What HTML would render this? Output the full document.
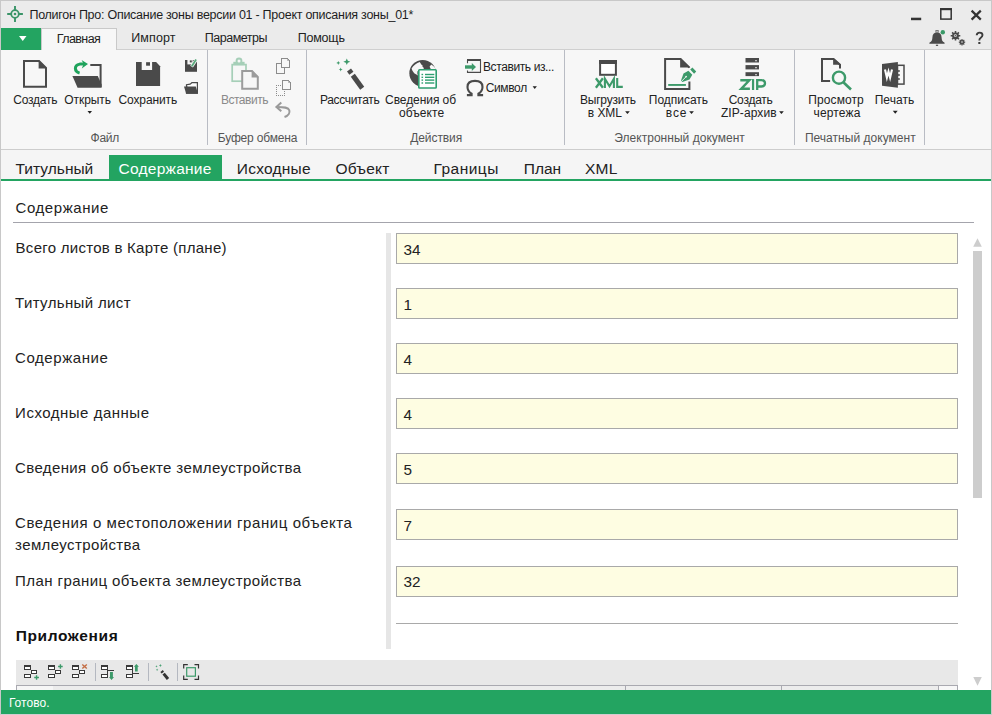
<!DOCTYPE html>
<html><head><meta charset="utf-8">
<style>
*{margin:0;padding:0;box-sizing:border-box}
html,body{width:992px;height:715px;overflow:hidden;background:#fff;font-family:"Liberation Sans",sans-serif;color:#1e1e1e}
.a{position:absolute}
.t{position:absolute;white-space:nowrap;line-height:1;font-family:"Liberation Sans",sans-serif}
svg{position:absolute;overflow:visible}
.sep{position:absolute;width:1px;background:#b9bcc4}
.inp{position:absolute;left:396px;width:562px;height:31px;background:#fefde2;border:1px solid #a9a9a9}
</style></head>
<body>
<!-- backgrounds -->
<div class="a" style="left:0;top:0;width:992px;height:49px;background:#ebebeb"></div>
<!-- ribbon body -->
<div class="a" style="left:0;top:49px;width:992px;height:101px;background:#f7f7f7;border-top:1px solid #cfcfcf;border-bottom:1px solid #cdcdcd"></div>
<!-- green app button -->
<div class="a" style="left:1px;top:28px;width:40px;height:22px;background:#23a461"></div>
<svg style="left:0;top:0" width="992" height="60">
  <polygon points="19,36 26.5,36 22.75,41" fill="#fff"/>
</svg>
<!-- active ribbon tab -->
<div class="a" style="left:41px;top:28px;width:76px;height:22px;background:#f7f7f7;border:1px solid #c9c9c9;border-bottom:none"></div>
<!-- ribbon separators -->
<div class="sep" style="left:207px;top:50px;height:95px"></div>
<div class="sep" style="left:306px;top:50px;height:95px"></div>
<div class="sep" style="left:564px;top:50px;height:95px"></div>
<div class="sep" style="left:794px;top:50px;height:95px"></div>
<div class="sep" style="left:924px;top:50px;height:95px"></div>
<!-- doc tabs strip -->
<div class="a" style="left:0;top:150px;width:992px;height:29px;background:#f5f5f5"></div>
<div class="a" style="left:109px;top:155px;width:113px;height:25px;background:#23a461"></div>
<div class="a" style="left:0;top:179px;width:992px;height:2px;background:#23a461"></div>
<!-- content header line -->
<div class="a" style="left:13px;top:222px;width:961px;height:1px;background:#a4a4ac"></div>
<!-- splitter -->
<div class="a" style="left:386px;top:233px;width:5px;height:416px;background:#e6e6e6"></div>
<!-- inputs -->
<div class="inp" style="top:233px"></div>
<div class="inp" style="top:288px"></div>
<div class="inp" style="top:343px"></div>
<div class="inp" style="top:398px"></div>
<div class="inp" style="top:453px"></div>
<div class="inp" style="top:509px"></div>
<div class="inp" style="top:566px"></div>
<div class="a" style="left:396px;top:623px;width:562px;height:1px;background:#a9a9a9"></div>
<!-- scrollbar -->
<svg style="left:0;top:0" width="992" height="715">
  <polygon points="973.2,246.7 977.5,238.3 981.8,246.7" fill="#cdcdcd"/>
  <rect x="973" y="251" width="9" height="247" fill="#cdcdcd"/>
  <polygon points="973.3,677 981.8,677 977.5,685.7" fill="#cdcdcd"/>
</svg>
<!-- bottom toolbar -->
<div class="a" style="left:16px;top:660px;width:942px;height:25px;background:#e8e8e8"></div>
<div class="a" style="left:16px;top:685px;width:942px;height:1px;background:#a9a9b0"></div>
<div class="a" style="left:16px;top:686px;width:942px;height:4px;background:#ececec"></div>
<div class="a" style="left:17px;top:686px;width:36px;height:4px;background:#f6f6f6"></div>
<div class="a" style="left:16px;top:686px;width:1px;height:4px;background:#a9a9b0"></div>
<div class="a" style="left:625px;top:686px;width:1px;height:4px;background:#a9a9b0"></div>
<div class="a" style="left:781px;top:686px;width:1px;height:4px;background:#a9a9b0"></div>
<div class="a" style="left:938px;top:686px;width:1px;height:4px;background:#a9a9b0"></div>
<div class="a" style="left:939px;top:686px;width:18px;height:4px;background:#f8f8f8"></div>
<div class="a" style="left:957px;top:686px;width:1px;height:4px;background:#a9a9b0"></div>
<div class="a" style="left:95px;top:663px;width:1px;height:18px;background:#b4b8c0"></div>
<div class="a" style="left:148px;top:663px;width:1px;height:18px;background:#b4b8c0"></div>
<div class="a" style="left:177px;top:663px;width:1px;height:18px;background:#b4b8c0"></div>
<!-- status bar -->
<div class="a" style="left:0;top:690px;width:992px;height:24px;background:#23a461"></div>
<!-- window border -->
<div class="a" style="left:0;top:0;width:992px;height:715px;border:1px solid #c8c8c8;border-bottom-color:#d2cdd0"></div>
<svg style="left:0;top:0" width="992" height="715" viewBox="0 0 992 715">
<!-- app icon -->
<g fill="none" stroke="#3a9468">
  <circle cx="15" cy="14" r="3.8" stroke-width="1.8"/>
  <path d="M7.2 14H11.2M18.8 14H22.9M15 6V10.2M15 17.8V21.9" stroke-width="1.9"/>
</g>
<circle cx="15" cy="14" r="1.3" fill="#3a9468"/>
<!-- window controls -->
<rect x="911" y="17.7" width="10.2" height="2.5" fill="#333"/>
<rect x="940.8" y="8.9" width="10.4" height="10.2" fill="none" stroke="#333" stroke-width="1.5"/>
<rect x="940" y="8.2" width="12" height="2" fill="#333"/>
<path d="M971.6 10.6L980.8 19.6M980.8 10.6L971.6 19.6" stroke="#333" stroke-width="2.2"/>
<!-- bell -->
<path d="M929.3 43.8L929.6 42.6C931.6 41.7 932.3 40 932.4 37.5C932.5 34.5 934 32.6 937 32.6C940 32.6 941.5 34.5 941.6 37.5C941.7 40 942.4 41.7 944.4 42.6L944.7 43.8Z" fill="#4a4a4a"/>
<rect x="935.9" y="30.5" width="2.3" height="1.7" fill="none" stroke="#6e6e6e" stroke-width="0.9"/>
<rect x="935.9" y="44.7" width="2.2" height="1.2" fill="#4a4a4a"/>
<circle cx="942.8" cy="32.2" r="2.2" fill="#3a9a68"/>
<!-- gears -->
<g fill="#4a4a4a">
  <circle cx="955.5" cy="35.8" r="3.4"/>
  <path d="M955.5 31V40.6M950.7 35.8H960.3M952.1 32.4L958.9 39.2M958.9 32.4L952.1 39.2" stroke="#4a4a4a" stroke-width="1.6"/>
  <circle cx="962" cy="42.2" r="2.3"/>
  <path d="M962 39V45.4M958.8 42.2H965.2M959.7 39.9L964.3 44.5M964.3 39.9L959.7 44.5" stroke="#4a4a4a" stroke-width="1.2"/>
</g>
<circle cx="955.4" cy="35.6" r="1.5" fill="#c8c8c8"/><circle cx="955.4" cy="35.6" r="0.6" fill="#4a4a4a"/>
<circle cx="962" cy="42.1" r="1" fill="#aaaaaa"/>
<!-- ? -->
<path d="M976.7 35.3C976.8 33.5 978 32.6 979.6 32.6C981.4 32.6 982.5 33.7 982.5 35.1C982.5 36.4 981.8 37.1 980.8 37.8C979.8 38.5 979.3 39.1 979.3 40.4" fill="none" stroke="#3c3c3c" stroke-width="1.9"/><rect x="978.3" y="42" width="2.1" height="2" fill="#3c3c3c"/>
<!-- Создать: new doc -->
<path d="M24 61H39L46 68V86.8H24Z" fill="none" stroke="#4a4a4a" stroke-width="2"/>
<path d="M38.6 60L47 68.6H38.6Z" fill="#4a4a4a"/>
<!-- Открыть: open folder -->
<path d="M90.3 65H100.6V87" fill="none" stroke="#4a4a4a" stroke-width="2"/>
<path d="M72.4 76H97.8L101.6 84.5V87.8H77.6Z" fill="#4a4a4a"/>
<path d="M79.6 73.1C74.3 71.6 73.6 65.4 79.8 64.1C81 63.9 82.5 63.9 84.5 63.9" fill="none" stroke="#1fa35c" stroke-width="3"/>
<path d="M81.6 59.9L88 64.1L81.8 68.6L83.6 64.1Z" fill="#1fa35c"/>
<path d="M87.5 111H92L89.75 113.8Z" fill="#222"/>
<!-- Сохранить: floppy -->
<path d="M136 62H156.1L160.1 66.3V86H136Z" fill="#4a4a4a"/>
<rect x="141.7" y="61.5" width="10.4" height="8.5" fill="#f7f7f7"/>
<rect x="146.1" y="62.2" width="3.9" height="3.5" fill="#4a4a4a"/>
<!-- small save-as -->
<rect x="185" y="60" width="12" height="11.8" fill="#4a4a4a"/>
<rect x="187.4" y="59.5" width="5.3" height="4.9" fill="#f7f7f7"/>
<rect x="189.8" y="60.4" width="2" height="2" fill="#4a4a4a"/>
<path d="M191.6 66.6L196.3 59.5" stroke="#f7f7f7" stroke-width="3.2"/>
<path d="M191.8 66.3L196.1 59.6" stroke="#5aaa7d" stroke-width="1.8"/>
<!-- small open -->
<path d="M185.9 93.7V84.3L190 83.6L191.7 82H198V93.7Z" fill="#4a4a4a"/>
<path d="M187.1 86.5V85.3L190.4 84.7L192.2 83.2H196.8V91Z" fill="#fdfdfd"/>
<path d="M184 86.4H195.8L198 93.7H186.2Z" fill="#4a4a4a"/>
<!-- Вставить: paste (disabled) -->
<rect x="232.2" y="64.6" width="13.8" height="16.6" fill="none" stroke="#a6cfb8" stroke-width="1.7"/>
<rect x="233.3" y="61.8" width="11.3" height="3.4" fill="#a6cfb8"/>
<circle cx="239" cy="61" r="3.4" fill="#a6cfb8"/>
<circle cx="239" cy="61" r="1.5" fill="#f7f7f7"/>
<path d="M242.2 71.1H252L257.8 77V88.7H242.2Z" fill="#f7f7f7" stroke="#9c9c9c" stroke-width="2"/>
<path d="M251.6 70.1L258.8 77.5H251.6Z" fill="#9c9c9c"/>
<!-- copy -->
<g shape-rendering="crispEdges">
<rect x="276.5" y="63.5" width="8" height="10" fill="none" stroke="#8c8c8c" stroke-width="1.1"/>
<path d="M281.5 58.5H287.5L289.5 60.5V67.5H281.5Z" fill="#f7f7f7" stroke="#8c8c8c" stroke-width="1.1"/>
<path d="M282.5 80.5H288.5L290.5 82.5V89.5H282.5Z" fill="#f7f7f7" stroke="#8c8c8c" stroke-width="1.1"/>
<rect x="276" y="85" width="1" height="1" fill="#8c8c8c"/><rect x="278" y="85" width="1" height="1" fill="#8c8c8c"/><rect x="280" y="85" width="1" height="1" fill="#8c8c8c"/><rect x="276" y="87" width="1" height="1" fill="#8c8c8c"/><rect x="276" y="89" width="1" height="1" fill="#8c8c8c"/><rect x="276" y="91" width="1" height="1" fill="#8c8c8c"/><rect x="276" y="93" width="1" height="1" fill="#8c8c8c"/><rect x="276" y="95" width="1" height="1" fill="#8c8c8c"/><rect x="278" y="95" width="1" height="1" fill="#8c8c8c"/><rect x="280" y="95" width="1" height="1" fill="#8c8c8c"/><rect x="282" y="95" width="1" height="1" fill="#8c8c8c"/><rect x="284" y="95" width="1" height="1" fill="#8c8c8c"/><rect x="284" y="91" width="1" height="1" fill="#8c8c8c"/><rect x="284" y="93" width="1" height="1" fill="#8c8c8c"/>
</g>
<path d="M287.3 58.8L289.2 60.7H287.3Z" fill="#8c8c8c"/><path d="M288.3 80.8L290.2 82.7H288.3Z" fill="#8c8c8c"/>
<!-- undo -->
<path d="M284.5 117C288.8 115.5 290 112.5 289.3 110.2C288.3 107.2 284.5 106.9 277 106.9" fill="none" stroke="#9a9a9a" stroke-width="2"/>
<path d="M281.3 102.6L276.4 106.9L281.3 111.3" fill="none" stroke="#9a9a9a" stroke-width="2"/>
<!-- Рассчитать: wand -->
<g fill="#3d9a6a">
  <path d="M346.8 58.4L347.8 60.7L350.3 61.7L347.8 62.7L346.8 65.1L345.8 62.7L343.3 61.7L345.8 60.7Z"/>
  <path d="M338.3 60.9L338.9 62.3L340.3 62.9L338.9 63.5L338.3 64.9L337.7 63.5L336.3 62.9L337.7 62.3Z"/>
  <path d="M340.7 67.5L341.3 68.9L342.7 69.5L341.3 70.1L340.7 71.5L340.1 70.1L338.7 69.5L340.1 68.9Z"/>
</g>
<path d="M349 70L351.4 73.3" stroke="#4a4a4a" stroke-width="5"/>
<path d="M352.8 75.2L362.2 88.3" stroke="#4a4a4a" stroke-width="5"/>
<!-- Сведения об объекте: globe -->
<circle cx="422.7" cy="73.3" r="13.35" fill="#4a4a4a"/>
<path d="M411.6 68.6C413.5 65.5 416.5 63 419.8 62.1L421.3 64.4L422.6 65.4L422.4 66.4L423.5 67.6L423.9 69.2L419 69.8L417.4 71.6L417.4 74.2L418.5 75.8L414.2 73.2L412.3 70.5Z" fill="#f7f7f7"/>
<path d="M429.6 66.7L431.2 64.6C433.2 65.8 434.8 67.2 435.8 69.3L431 69.5Z" fill="#f7f7f7"/>
<rect x="418.8" y="69.8" width="17.4" height="18.2" rx="0.8" fill="#fff" stroke="#2e9f70" stroke-width="1.6"/>
<g fill="#2e9f70">
  <rect x="421.5" y="73.8" width="1.6" height="1.4"/><rect x="425" y="73.8" width="9.3" height="1.4"/>
  <rect x="421.5" y="76.6" width="1.6" height="1.4"/><rect x="425" y="76.6" width="9.3" height="1.4"/>
  <rect x="421.5" y="79.4" width="1.6" height="1.4"/><rect x="425" y="79.4" width="9.3" height="1.4"/>
  <rect x="421.5" y="82.3" width="1.6" height="1.4"/><rect x="425" y="82.3" width="9.3" height="1.4"/>
</g>
<!-- Вставить из: icon -->
<rect x="467" y="59" width="14" height="2" fill="#4a4a4a"/>
<path d="M467.5 60V63.3M467.5 70.5V72.4H480.5V60" fill="none" stroke="#4a4a4a" stroke-width="1.1"/>
<rect x="465" y="65.3" width="7.3" height="3.4" fill="#3d9a6a"/>
<path d="M471.8 62.9L476 67L471.8 71.1Z" fill="#3d9a6a"/>
<!-- omega -->
<path d="M466.9 95.1H471.6V93.6C468.8 92 467.5 89.5 467.5 86.9C467.5 82.9 470.7 80.9 475 80.9C479.3 80.9 482.5 82.9 482.5 86.9C482.5 89.5 481.2 92 478.4 93.6V95.1H483.1" fill="none" stroke="#4a4a4a" stroke-width="2.1"/>
<path d="M532.6 86.3H536.9L534.75 88.9Z" fill="#222"/>
<!-- XML icon -->
<rect x="600.1" y="61" width="15.8" height="13.8" fill="#fff" stroke="#4a4a4a" stroke-width="2"/>
<rect x="599.1" y="60" width="17.8" height="4" fill="#4a4a4a"/>
<g fill="none" stroke="#3d9a6a" stroke-width="2.1">
<path d="M595.9 78.3L602.9 87.8M602.9 78.3L595.9 87.8" stroke-width="2.3"/>
<path d="M604.9 88V78.8L609.5 86.2L613.9 78.8V88" stroke-linejoin="miter"/>
<path d="M617.2 78.1V86.9H622.8"/>
</g>
<path d="M625.1 111.2H629.8L627.45 113.9Z" fill="#222"/>
<!-- sign doc -->
<path d="M689.4 81.6V88.9H665.1V59.1H680.6L689.4 67.6" fill="none" stroke="#4a4a4a" stroke-width="2"/>
<path d="M680.1 58.1L690.4 67.5H680.1Z" fill="#4a4a4a"/>
<rect x="668.2" y="84" width="17.7" height="1.9" fill="#3d9a6a"/>
<path d="M681 80.6L683.5 73.6L688.4 70.8L692.3 74.7L689.5 79.5L682.4 82Z" fill="#3d9a6a"/>
<path d="M690.2 69.6L692.4 67.6L696.2 71.5L694.1 73.7Z" fill="#3d9a6a"/>
<path d="M681.6 81.3L685.8 77" stroke="#f7f7f7" stroke-width="0.9"/>
<circle cx="686.1" cy="76.6" r="0.9" fill="#f7f7f7"/>
<path d="M689.2 111.2H693.9L691.55 113.9Z" fill="#222"/>
<!-- ZIP icon -->
<g fill="#4a4a4a">
  <rect x="745.5" y="58" width="13.5" height="4.5"/>
  <rect x="745.5" y="65.1" width="13.5" height="4.3"/>
  <rect x="745.5" y="72.2" width="13.5" height="3.9"/>
</g>
<g fill="#bbb"><rect x="755" y="60" width="2" height="1.3"/><rect x="755" y="67" width="2" height="1.3"/><rect x="755" y="74" width="2" height="1.3"/></g>
<g fill="none" stroke="#3d9a6a">
<path d="M740.3 80.3H749.3L741.2 88.8H749.9" stroke-width="2.4" stroke-linejoin="miter"/>
<path d="M753.05 79.1V90" stroke-width="2.2"/>
<path d="M757.2 90V80.2H761.4C763.9 80.2 765 81.5 765 83.35C765 85.2 763.9 86.5 761.4 86.5H757.2" stroke-width="2.3"/>
</g>
<path d="M779.1 111.2H783.8L781.45 113.9Z" fill="#222"/>
<!-- preview -->
<path d="M830.1 81H822V59H833.6L840 64.8V68.6" fill="none" stroke="#4a4a4a" stroke-width="2"/>
<path d="M833.1 58L841 64.7H833.1Z" fill="#4a4a4a"/>
<circle cx="839" cy="77.7" r="6.1" fill="none" stroke="#3d9a6a" stroke-width="2.4"/>
<path d="M843.6 82.5L851 89.5" stroke="#3d9a6a" stroke-width="2.6"/>
<!-- word -->
<rect x="897.5" y="65.3" width="6.5" height="18.8" fill="none" stroke="#4a4a4a" stroke-width="1.5"/>
<path d="M882 64.1L897.9 62.1V87.8L882 85.8Z" fill="#4a4a4a"/>
<g fill="#4a4a4a"><rect x="897" y="70.2" width="2.8" height="1.6"/><rect x="897" y="74.2" width="2.8" height="1.6"/><rect x="897" y="78.2" width="2.8" height="1.6"/></g>
<path d="M885 69.4L886.9 77.6L888.5 71.6L890.1 77.6L892 69.4" fill="none" stroke="#fff" stroke-width="2.1" stroke-linejoin="miter" stroke-miterlimit="6"/>
<path d="M892.8 110.8H897.7L895.25 113.8Z" fill="#222"/>
<!-- bottom toolbar icons -->
<g shape-rendering="crispEdges">
<rect x="24" y="665" width="7" height="5" fill="#3a3a3a"/><rect x="25" y="667" width="5" height="2" fill="#fff"/>
<rect x="31" y="670" width="6" height="4" fill="#3a3a3a"/><rect x="32" y="671" width="4" height="2" fill="#fff"/>
<rect x="24" y="674" width="7" height="4" fill="#3a3a3a"/><rect x="25" y="675" width="5" height="2" fill="#fff"/>
<rect x="48" y="665" width="7" height="5" fill="#3a3a3a"/><rect x="49" y="667" width="5" height="2" fill="#fff"/>
<rect x="55" y="670" width="6" height="4" fill="#3a3a3a"/><rect x="56" y="671" width="4" height="2" fill="#fff"/>
<rect x="48" y="674" width="7" height="4" fill="#3a3a3a"/><rect x="49" y="675" width="5" height="2" fill="#fff"/>
<rect x="72" y="665" width="7" height="5" fill="#3a3a3a"/><rect x="73" y="667" width="5" height="2" fill="#fff"/>
<rect x="79" y="670" width="6" height="4" fill="#3a3a3a"/><rect x="80" y="671" width="4" height="2" fill="#fff"/>
<rect x="72" y="674" width="7" height="4" fill="#3a3a3a"/><rect x="73" y="675" width="5" height="2" fill="#fff"/>
<rect x="101" y="665" width="7" height="5" fill="#3a3a3a"/><rect x="102" y="667" width="5" height="2" fill="#fff"/>
<rect x="101" y="674" width="7" height="4" fill="#3a3a3a"/><rect x="102" y="675" width="5" height="2" fill="#fff"/>
<rect x="107" y="669" width="1" height="5" fill="#3a3a3a"/>
<rect x="126" y="665" width="7" height="5" fill="#3a3a3a"/><rect x="127" y="667" width="5" height="2" fill="#fff"/>
<rect x="126" y="674" width="7" height="4" fill="#3a3a3a"/><rect x="127" y="675" width="5" height="2" fill="#fff"/>
<rect x="132" y="669" width="1" height="5" fill="#3a3a3a"/>
<rect x="107" y="670" width="7" height="1" fill="#3a3a3a"/>
<rect x="132" y="673" width="7" height="1" fill="#3a3a3a"/>
</g>
<path d="M34.2 677.5H38.9M36.55 675.2V679.8" stroke="#3d9a6a" stroke-width="1.4"/>
<path d="M58.1 666.5H62.7M60.4 664.2V668.8" stroke="#3d9a6a" stroke-width="1.4"/>
<path d="M82.3 664.4L86.8 668.6M86.8 664.4L82.3 668.6" stroke="#c46e45" stroke-width="1.4"/>
<path d="M110 672.1H112.9V677H114L111.5 680.1L109 677H110Z" fill="#3d9a6a"/>
<path d="M135 671.6H137.7V666.8H138.9L136.4 663.9L133.9 666.8H135Z" fill="#3d9a6a"/>
<g fill="#4ea377"><path d="M156.5 665.2L156.9 666L157.7 666.4L156.9 666.8L156.5 667.6L156.1 666.8L155.3 666.4L156.1 666Z"/><path d="M160.4 664L160.9 665L161.9 665.5L160.9 666L160.4 667L159.9 666L158.9 665.5L159.9 665Z"/><path d="M157.1 668.6L157.5 669.4L158.3 669.8L157.5 670.2L157.1 671L156.7 670.2L155.9 669.8L156.7 669.4Z"/></g>
<path d="M161.6 671L162.8 672.6" stroke="#333" stroke-width="3"/>
<path d="M163.6 673.6L168 679" stroke="#333" stroke-width="3"/>
<path d="M183.7 668.5V664.7H187.8M194.5 664.7H198.5V668.5M198.5 675.5V679.3H194.5M187.8 679.3H183.7V675.5" fill="none" stroke="#333" stroke-width="1.2"/>
<rect x="186.7" y="667.7" width="8.7" height="8.5" fill="none" stroke="#3d9a6a" stroke-width="1.2"/>
</svg>

<div class='t' style='left:29.45px;top:9.32px;font-size:12.5px;font-weight:400;color:#1e1e1e;letter-spacing:-0.262px;'>Полигон Про: Описание зоны версии 01 - Проект описания зоны_01*</div>
<div class='t' style='left:56.65px;top:32.82px;font-size:12.5px;font-weight:400;color:#222;letter-spacing:-0.563px;'>Главная</div>
<div class='t' style='left:131.25px;top:32.02px;font-size:12.5px;font-weight:400;color:#222;letter-spacing:0.099px;'>Импорт</div>
<div class='t' style='left:204.85px;top:32.02px;font-size:12.5px;font-weight:400;color:#222;letter-spacing:-0.505px;'>Параметры</div>
<div class='t' style='left:297.65px;top:32.02px;font-size:12.5px;font-weight:400;color:#222;letter-spacing:-0.196px;'>Помощь</div>
<div class='t' style='left:13.28px;top:93.84px;font-size:12px;font-weight:400;color:#222;letter-spacing:-0.235px;'>Создать</div>
<div class='t' style='left:64.28px;top:93.84px;font-size:12px;font-weight:400;color:#222;letter-spacing:-0.057px;'>Открыть</div>
<div class='t' style='left:118.48px;top:93.84px;font-size:12px;font-weight:400;color:#222;letter-spacing:-0.105px;'>Сохранить</div>
<div class='t' style='left:220.88px;top:93.84px;font-size:12px;font-weight:400;color:#8a8a8a;letter-spacing:-0.468px;'>Вставить</div>
<div class='t' style='left:319.88px;top:93.84px;font-size:12px;font-weight:400;color:#222;letter-spacing:-0.314px;'>Рассчитать</div>
<div class='t' style='left:385.08px;top:93.84px;font-size:12px;font-weight:400;color:#222;letter-spacing:-0.070px;'>Сведения об</div>
<div class='t' style='left:398.98px;top:107.24px;font-size:12px;font-weight:400;color:#222;letter-spacing:0.058px;'>объекте</div>
<div class='t' style='left:482.98px;top:61.34px;font-size:12px;font-weight:400;color:#222;letter-spacing:-0.393px;'>Вставить из...</div>
<div class='t' style='left:485.68px;top:81.94px;font-size:12px;font-weight:400;color:#222;letter-spacing:-0.356px;'>Символ</div>
<div class='t' style='left:579.88px;top:93.84px;font-size:12px;font-weight:400;color:#222;letter-spacing:-0.175px;'>Выгрузить</div>
<div class='t' style='left:587.78px;top:107.24px;font-size:12px;font-weight:400;color:#222;letter-spacing:-0.048px;'>в XML</div>
<div class='t' style='left:648.78px;top:93.84px;font-size:12px;font-weight:400;color:#222;letter-spacing:-0.013px;'>Подписать</div>
<div class='t' style='left:665.78px;top:107.24px;font-size:12px;font-weight:400;color:#222;letter-spacing:0.889px;'>все</div>
<div class='t' style='left:728.68px;top:93.84px;font-size:12px;font-weight:400;color:#222;letter-spacing:-0.235px;'>Создать</div>
<div class='t' style='left:720.88px;top:107.24px;font-size:12px;font-weight:400;color:#222;letter-spacing:0.091px;'>ZIP-архив</div>
<div class='t' style='left:808.28px;top:93.84px;font-size:12px;font-weight:400;color:#222;letter-spacing:0.098px;'>Просмотр</div>
<div class='t' style='left:813.48px;top:107.24px;font-size:12px;font-weight:400;color:#222;letter-spacing:0.160px;'>чертежа</div>
<div class='t' style='left:874.68px;top:93.84px;font-size:12px;font-weight:400;color:#222;letter-spacing:0.037px;'>Печать</div>
<div class='t' style='left:90.58px;top:132.24px;font-size:12px;font-weight:400;color:#555;letter-spacing:-0.305px;'>Файл</div>
<div class='t' style='left:217.78px;top:132.24px;font-size:12px;font-weight:400;color:#555;letter-spacing:-0.168px;'>Буфер обмена</div>
<div class='t' style='left:410.28px;top:132.24px;font-size:12px;font-weight:400;color:#555;letter-spacing:-0.097px;'>Действия</div>
<div class='t' style='left:614.28px;top:132.24px;font-size:12px;font-weight:400;color:#555;letter-spacing:0.030px;'>Электронный документ</div>
<div class='t' style='left:804.88px;top:132.24px;font-size:12px;font-weight:400;color:#555;letter-spacing:0.029px;'>Печатный документ</div>
<div class='t' style='left:15.57px;top:161.08px;font-size:15.5px;font-weight:400;color:#222;letter-spacing:0.011px;'>Титульный</div>
<div class='t' style='left:118.47px;top:161.08px;font-size:15.5px;font-weight:400;color:#fff;letter-spacing:0.256px;'>Содержание</div>
<div class='t' style='left:236.77px;top:161.08px;font-size:15.5px;font-weight:400;color:#222;letter-spacing:0.239px;'>Исходные</div>
<div class='t' style='left:335.57px;top:161.08px;font-size:15.5px;font-weight:400;color:#222;letter-spacing:0.181px;'>Объект</div>
<div class='t' style='left:433.47px;top:161.08px;font-size:15.5px;font-weight:400;color:#222;letter-spacing:0.467px;'>Границы</div>
<div class='t' style='left:523.77px;top:161.08px;font-size:15.5px;font-weight:400;color:#222;letter-spacing:-0.025px;'>План</div>
<div class='t' style='left:584.97px;top:161.08px;font-size:15.5px;font-weight:400;color:#222;letter-spacing:0.213px;'>XML</div>
<div class='t' style='left:15.60px;top:200.30px;font-size:15px;font-weight:400;color:#222;letter-spacing:0.559px;'>Содержание</div>
<div class='t' style='left:15.60px;top:240.30px;font-size:15px;font-weight:400;color:#222;letter-spacing:0.271px;'>Всего листов в Карте (плане)</div>
<div class='t' style='left:15.10px;top:295.10px;font-size:15px;font-weight:400;color:#222;letter-spacing:0.363px;'>Титульный лист</div>
<div class='t' style='left:15.10px;top:350.10px;font-size:15px;font-weight:400;color:#222;letter-spacing:0.559px;'>Содержание</div>
<div class='t' style='left:15.10px;top:405.10px;font-size:15px;font-weight:400;color:#222;letter-spacing:0.511px;'>Исходные данные</div>
<div class='t' style='left:15.10px;top:460.10px;font-size:15px;font-weight:400;color:#222;letter-spacing:0.369px;'>Сведения об объекте землеустройства</div>
<div class='t' style='left:15.10px;top:514.90px;font-size:15px;font-weight:400;color:#222;letter-spacing:0.568px;'>Сведения о местоположении границ объекта</div>
<div class='t' style='left:15.10px;top:536.60px;font-size:15px;font-weight:400;color:#222;letter-spacing:0.387px;'>землеустройства</div>
<div class='t' style='left:15.10px;top:572.90px;font-size:15px;font-weight:400;color:#222;letter-spacing:0.424px;'>План границ объекта землеустройства</div>
<div class='t' style='left:15.67px;top:627.88px;font-size:15.5px;font-weight:700;color:#111;letter-spacing:0.634px;'>Приложения</div>
<div class='t' style='left:403.38px;top:241.85px;font-size:15.3px;font-weight:400;color:#222;letter-spacing:0.000px;'>34</div>
<div class='t' style='left:403.38px;top:296.85px;font-size:15.3px;font-weight:400;color:#222;letter-spacing:0.000px;'>1</div>
<div class='t' style='left:403.38px;top:351.85px;font-size:15.3px;font-weight:400;color:#222;letter-spacing:0.000px;'>4</div>
<div class='t' style='left:403.38px;top:406.85px;font-size:15.3px;font-weight:400;color:#222;letter-spacing:0.000px;'>4</div>
<div class='t' style='left:403.38px;top:461.85px;font-size:15.3px;font-weight:400;color:#222;letter-spacing:0.000px;'>5</div>
<div class='t' style='left:403.38px;top:517.55px;font-size:15.3px;font-weight:400;color:#222;letter-spacing:0.000px;'>7</div>
<div class='t' style='left:403.38px;top:573.85px;font-size:15.3px;font-weight:400;color:#222;letter-spacing:0.000px;'>32</div>
<div class='t' style='left:8.88px;top:696.84px;font-size:12px;font-weight:400;color:#fff;letter-spacing:0.052px;'>Готово.</div>
</body></html>
